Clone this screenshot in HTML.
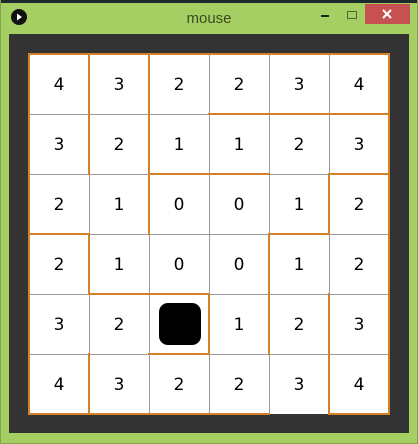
<!DOCTYPE html>
<html><head><style>
html,body{margin:0;padding:0;width:418px;height:444px;overflow:hidden;background:#a6cf63;}
svg{display:block}
</style></head><body>
<svg width="418" height="444" viewBox="0 0 418 444" xmlns="http://www.w3.org/2000/svg">
<rect x="0" y="0" width="418" height="444" fill="#a6cf63"/>
<rect x="0" y="0" width="418" height="3" fill="#1c2a2e"/>
<rect x="0" y="0" width="1" height="444" fill="#7fa84a"/>
<rect x="417" y="0" width="1" height="444" fill="#7fa84a"/>
<rect x="0" y="443" width="418" height="1" fill="#7fa84a"/>
<circle cx="19" cy="17" r="8" fill="#111"/>
<path d="M17 13.5 L22 17 L17 20.5 Z" fill="#fff"/>
<text x="209" y="23" text-anchor="middle" font-family="Liberation Sans, sans-serif" font-size="15" fill="#3a4a20">mouse</text>
<rect x="321" y="15" width="8" height="2" fill="#1a2a10"/>
<rect x="347.5" y="11.5" width="9" height="7" fill="none" stroke="#4a6a30" stroke-width="1"/>
<rect x="365" y="4" width="45" height="20" fill="#c75050"/>
<path d="M383 10 L391 18 M391 10 L383 18" stroke="#fff" stroke-width="2"/>
<rect x="9" y="34" width="400" height="399" fill="#333333"/>
<rect x="29" y="54" width="360" height="360" fill="#fff"/>
<g stroke="#999" stroke-width="1">
<path d="M89.5 54V414M149.5 54V414M209.5 54V414M269.5 54V414M329.5 54V414"/>
<path d="M29 114.5H389M29 174.5H389M29 234.5H389M29 294.5H389M29 354.5H389"/>
</g>
<rect x="159" y="303" width="42" height="42" rx="9" fill="#000"/>
<g stroke="#d4822a" stroke-width="2" fill="none" stroke-linecap="square">
<path d="M29 54H389V414M29 54V414H269M329 414H389"/>
<path d="M89 54V174M149 54V174M209 114H389M149 174H269M329 174H389M149 174V234M329 174V234"/>
<path d="M29 234H89V294H209M269 234H329M269 234V354M209 294V354H149M329 294V414M89 354V414"/>
</g>
<g font-family="DejaVu Sans, Liberation Sans, sans-serif" font-size="17" fill="#000" text-anchor="middle">
<text x="59" y="90">4</text><text x="119" y="90">3</text><text x="179" y="90">2</text><text x="239" y="90">2</text><text x="299" y="90">3</text><text x="359" y="90">4</text>
<text x="59" y="150">3</text><text x="119" y="150">2</text><text x="179" y="150">1</text><text x="239" y="150">1</text><text x="299" y="150">2</text><text x="359" y="150">3</text>
<text x="59" y="210">2</text><text x="119" y="210">1</text><text x="179" y="210">0</text><text x="239" y="210">0</text><text x="299" y="210">1</text><text x="359" y="210">2</text>
<text x="59" y="270">2</text><text x="119" y="270">1</text><text x="179" y="270">0</text><text x="239" y="270">0</text><text x="299" y="270">1</text><text x="359" y="270">2</text>
<text x="59" y="330">3</text><text x="119" y="330">2</text><text x="239" y="330">1</text><text x="299" y="330">2</text><text x="359" y="330">3</text>
<text x="59" y="390">4</text><text x="119" y="390">3</text><text x="179" y="390">2</text><text x="239" y="390">2</text><text x="299" y="390">3</text><text x="359" y="390">4</text>
</g>
</svg>
</body></html>
